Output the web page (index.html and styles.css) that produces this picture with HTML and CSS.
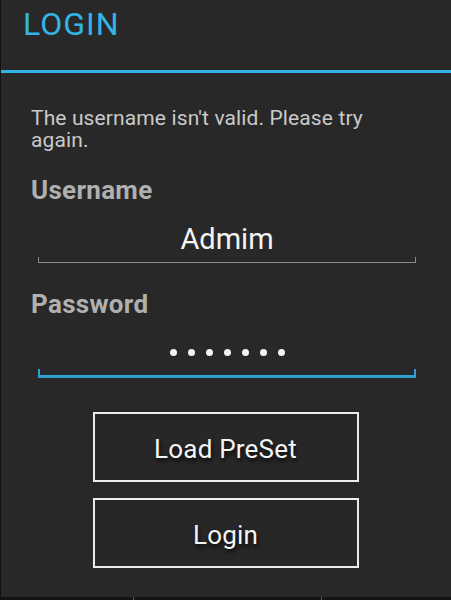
FILE: index.html
```html
<!DOCTYPE html>
<html lang="en">
<head>
<meta charset="utf-8">
<title>Login</title>
<link rel="stylesheet" href="styles.css">
</head>
<body>
<div class="dialog">
  <header class="title">LOGIN</header>
  <main class="content">
    <p class="msg">The username isn't valid. Please try again.</p>
    <div class="label label-user">Username</div>
    <div class="field">
      <div class="value">Admim</div>
      <div class="line"></div>
    </div>
    <div class="label label-pass">Password</div>
    <div class="field focused">
      <div class="dots">
        <span class="dot"></span><span class="dot"></span><span class="dot"></span><span class="dot"></span><span class="dot"></span><span class="dot"></span><span class="dot"></span>
      </div>
      <div class="line"></div>
    </div>
    <div class="actions">
      <button class="btn">Load PreSet</button>
      <button class="btn">Login</button>
    </div>
  </main>
  <footer class="bar">
    <div class="cell"></div>
    <div class="cell"></div>
    <div class="cell"></div>
  </footer>
</div>
</body>
</html>
```
FILE: styles.css
```css
html, body {
  margin: 0;
  padding: 0;
  background: #282828;
}
body {
  font-family: Roboto, "Noto Sans", "DejaVu Sans", sans-serif;
  width: 451px;
  height: 600px;
  overflow: hidden;
}
.dialog {
  width: 451px;
  height: 600px;
  box-sizing: border-box;
  border-left: 1px solid #121212;
  background: #282828;
  display: flex;
  flex-direction: column;
}
.title {
  box-sizing: border-box;
  height: 73px;
  padding: 8px 0 0 22px;
  font-size: 32px;
  line-height: 32px;
  letter-spacing: 1px;
  color: #33b5e5;
  border-bottom: 3px solid #33b5e5;
}
.content {
  padding: 0 31px 0 30px;
  display: flex;
  flex-direction: column;
  flex: 1;
}
.msg {
  margin: 34px 0 0 0;
  width: 365px;
  font-size: 21px;
  line-height: 22px;
  letter-spacing: 0.12px;
  color: #c9c9c9;
}
.label {
  font-size: 26px;
  line-height: 25px;
  font-weight: bold;
  letter-spacing: 0.3px;
  color: #b0b0b0;
}
.label-user {
  margin-top: 27px;
}
.label-pass {
  margin-top: 29.5px;
}
.field {
  margin: 0 4px 0 7px;
  display: flex;
  flex-direction: column;
}
.value {
  margin-top: 21.5px;
  font-size: 29px;
  line-height: 29px;
  color: #f4f4f4;
  text-align: center;
}
.field .line {
  margin-top: 3px;
  height: 5px;
  border: 1px solid #8a8a8a;
  border-top: none;
}
.dots {
  margin-top: 20.5px;
  height: 29px;
  display: flex;
  justify-content: center;
  align-items: center;
  gap: 11px;
}
.dot {
  width: 7px;
  height: 7px;
  border-radius: 50%;
  background: #f4f4f4;
}
.field.focused .line {
  margin-top: 2px;
  height: 6px;
  border: 2px solid #2e9fd0;
  border-top: none;
  border-bottom-width: 3px;
}
.actions {
  margin-top: 34.5px;
  display: flex;
  flex-direction: column;
  align-items: center;
  gap: 16px;
}
.btn {
  box-sizing: border-box;
  width: 266px;
  height: 70px;
  margin: 0;
  padding: 3px 0 0 0;
  border: 2px solid #ececec;
  background: #272727;
  color: #f4f4f4;
  font-family: Roboto, "Noto Sans", "DejaVu Sans", sans-serif;
  font-size: 26px;
  line-height: 26px;
  letter-spacing: 0.2px;
  text-shadow: 1px 3px 4px rgba(0, 0, 0, 0.85);
}
.bar {
  height: 3px;
  background: #141414;
  display: grid;
  grid-template-columns: 132px 188px 1fr;
}
.cell + .cell {
  border-left: 1px solid #555555;
}
```
